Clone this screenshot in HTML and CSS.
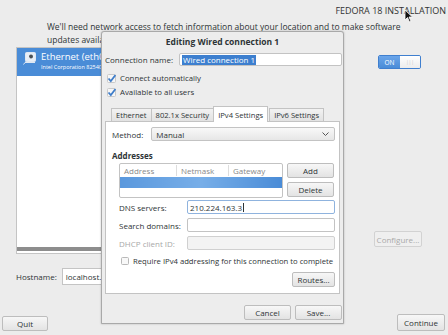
FILE: index.html
```html
<!DOCTYPE html>
<html lang="en">
<head>
    <meta charset="UTF-8">
    <title>Network Configuration</title>
    <link rel="stylesheet" href="styles.css">
</head>
<body>
    <header class="topbar">
        <span class="product">FEDORA 18 INSTALLATION</span>
    </header>
    <p class="intro">We'll need network access to fetch information about your location and to make software<br>updates available.</p>

    <div class="main">
        <div class="device-list">
            <div class="device selected">
                <svg class="device-icon" width="13" height="13" viewBox="0 0 13 13">
                    <rect x="2.5" y="0.5" width="10" height="9" rx="1" fill="#e8eef6" stroke="#dfe7f2"/>
                    <circle cx="8" cy="4.5" r="2" fill="#4a4f55"/>
                    <path d="M6.8 5.8 L2 10.5 L0.5 12.5 M2 10.5 L12 10.5" stroke="#dfe7f2" stroke-width="1" fill="none"/>
                </svg>
                <div class="device-text">
                    <div class="device-name">Ethernet (eth0)</div>
                    <div class="device-sub">Intel Corporation 82540EM Gigabit Ethernet Controller</div>
                </div>
            </div>
            <div class="list-fill"></div>
            <div class="hscroll"></div>
        </div>
        <div class="side">
            <div class="switch">
                <span class="switch-on">ON</span>
                <span class="switch-knob">|||</span>
            </div>
            <button class="btn configure" disabled>Configure...</button>
        </div>
    </div>

    <div class="hostname-row">
        <span class="hostname-label">Hostname:</span>
        <span class="hostname-input">localhost.localdomain</span>
    </div>

    <footer class="bottombar">
        <button class="btn quit">Quit</button>
        <button class="btn continue">Continue</button>
    </footer>

    <div class="dialog">
        <div class="dialog-title">Editing Wired connection 1</div>
        <div class="conn-row">
            <span class="conn-label">Connection name:</span>
            <span class="field conn-field"><span class="selection">Wired connection 1</span></span>
        </div>
        <label class="check-row first">
            <svg class="check" width="9" height="9" viewBox="0 0 9 9"><rect x="0.5" y="0.5" width="8" height="8" rx="1" fill="#f6f6f6" stroke="#c9c9c9"/><path d="M1.5 4.5 L3.8 7 L8.5 1" stroke="#3e7dc9" stroke-width="1.8" fill="none"/></svg>
            Connect automatically
        </label>
        <label class="check-row">
            <svg class="check" width="9" height="9" viewBox="0 0 9 9"><rect x="0.5" y="0.5" width="8" height="8" rx="1" fill="#f6f6f6" stroke="#c9c9c9"/><path d="M1.5 4.5 L3.8 7 L8.5 1" stroke="#3e7dc9" stroke-width="1.8" fill="none"/></svg>
            Available to all users
        </label>

        <div class="tabs">
            <span class="tab">Ethernet</span>
            <span class="tab">802.1x Security</span>
            <span class="tab active">IPv4 Settings</span>
            <span class="tab">IPv6 Settings</span>
        </div>
        <div class="panel">
            <div class="method-row">
                <span class="method-label">Method:</span>
                <span class="combo">Manual <svg width="7" height="5" viewBox="0 0 7 5"><path d="M0.5 0.5 L3.5 3.5 L6.5 0.5" stroke="#555" fill="none"/></svg></span>
            </div>
            <div class="section-title">Addresses</div>
            <div class="addr-block">
                <div class="addr-table">
                    <div class="addr-head">
                        <span class="col col-addr">Address</span>
                        <span class="col col-mask">Netmask</span>
                        <span class="col col-gw">Gateway</span>
                    </div>
                    <div class="addr-row"></div>
                </div>
                <div class="addr-buttons">
                    <button class="btn small">Add</button>
                    <button class="btn small">Delete</button>
                </div>
            </div>
            <div class="form-row">
                <span class="form-label">DNS servers:</span>
                <span class="field focus">210.224.163.3<span class="caret"></span></span>
            </div>
            <div class="form-row">
                <span class="form-label">Search domains:</span>
                <span class="field"></span>
            </div>
            <div class="form-row disabled">
                <span class="form-label">DHCP client ID:</span>
                <span class="field"></span>
            </div>
            <label class="check-row require">
                <svg class="check" width="8" height="8" viewBox="0 0 8 8"><rect x="0.5" y="0.5" width="7" height="7" rx="1" fill="#f8f8f8" stroke="#b9b9b9"/></svg>
                Require IPv4 addressing for this connection to complete
            </label>
            <div class="routes-row">
                <button class="btn routes">Routes...</button>
            </div>
        </div>
        <div class="dialog-buttons">
            <button class="btn action">Cancel</button>
            <button class="btn action">Save...</button>
        </div>
    </div>

    <svg class="cursor" width="10" height="14" viewBox="0 0 10 14">
        <path d="M1 1 L1 11 L3.5 8.5 L5.5 13 L7 12.3 L5 8 L8.5 8 Z" fill="#111" stroke="#fff" stroke-width="0.8"/>
    </svg>
</body>
</html>
```

FILE: styles.css
```css
body {
    margin: 0;
    width: 448px;
    height: 335px;
    overflow: hidden;
    position: relative;
    background-color: #ececec;
    font-family: 'Open Sans', 'DejaVu Sans', sans-serif;
    font-size: 8px;
    color: #2e3436;
}
.topbar {
    display: flex;
    justify-content: flex-end;
    height: 20px;
    padding: 4px 2px 0 0;
    box-sizing: border-box;
}
.product {
    font-size: 9px;
    color: #333;
}
.intro {
    margin: 0 0 0 47px;
    line-height: 13px;
    font-size: 8.5px;
}
.main {
    display: flex;
    margin-top: 1px;
}
.device-list {
    margin-left: 16px;
    width: 300px;
    height: 207px;
    background-color: #ffffff;
    border: 1px solid #c4c4c4;
    box-sizing: border-box;
    display: flex;
    flex-direction: column;
}
.device {
    display: flex;
    align-items: flex-start;
    gap: 5px;
    height: 28px;
    padding: 3px 0 0 6px;
    box-sizing: border-box;
}
.device.selected {
    background-color: #4a8cd7;
    color: #ffffff;
}
.device-icon {
    margin-top: 1px;
}
.device-text {
    width: 61px;
    overflow: hidden;
}
.device-name {
    font-size: 9.5px;
    line-height: 12px;
    white-space: nowrap;
    overflow: hidden;
}
.device-sub {
    font-size: 5.5px;
    line-height: 9px;
    white-space: nowrap;
    overflow: hidden;
}
.list-fill {
    flex: 1;
}
.hscroll {
    height: 4px;
    margin: 0 0 2px 0;
    background-color: #8d8d8d;
}
.side {
    flex: 1;
    display: flex;
    flex-direction: column;
    align-items: flex-start;
    padding-left: 62px;
}
.switch {
    display: flex;
    margin-top: 8px;
    width: 43px;
    height: 14px;
    border: 1px solid #3f7fcf;
    border-radius: 2px;
    box-sizing: border-box;
    overflow: hidden;
    font-size: 6.5px;
}
.switch-on {
    width: 21px;
    background: linear-gradient(#6aa5ea, #4a8cd7);
    color: #ffffff;
    display: flex;
    align-items: center;
    justify-content: center;
}
.switch-knob {
    flex: 1;
    background: linear-gradient(#ffffff, #ececec);
    color: #c8c8c8;
    display: flex;
    align-items: center;
    justify-content: center;
    font-size: 5px;
}
.btn {
    font-family: inherit;
    font-size: 8px;
    color: #2e3436;
    background: linear-gradient(#f7f7f7, #e3e3e3);
    border: 1px solid #bdbdbd;
    border-radius: 2px;
    padding: 0;
    display: flex;
    align-items: center;
    justify-content: center;
    box-sizing: border-box;
}
.configure {
    margin: 162px 0 0 -4px;
    width: 48px;
    height: 16px;
    color: #a9a9a9;
    background: #efefef;
    border-color: #d2d2d2;
}
.hostname-row {
    display: flex;
    align-items: center;
    margin: 14px 0 0 16px;
    height: 17px;
    gap: 5px;
}
.hostname-input {
    height: 17px;
    width: 46px;
    background-color: #ffffff;
    border: 1px solid #c4c4c4;
    border-right: none;
    box-sizing: border-box;
    padding-left: 3px;
    line-height: 15px;
    white-space: nowrap;
    overflow: hidden;
}
.bottombar {
    display: flex;
    justify-content: space-between;
    align-items: flex-end;
    margin-top: 31px;
    padding: 0 3px 0 2px;
}
.quit {
    width: 46px;
    height: 15px;
}
.continue {
    width: 48px;
    height: 17px;
    margin-top: -2px;
}

/* dialog overlaying the page */
.dialog {
    position: absolute;
    left: 101px;
    top: 31px;
    width: 243px;
    height: 293px;
    background-color: #ededed;
    border: 1px solid #a9a9a9;
    border-radius: 3px 3px 0 0;
    box-sizing: border-box;
    box-shadow: 0 0 2px rgba(0, 0, 0, 0.25);
}
.dialog-title {
    height: 19px;
    text-align: center;
    font-weight: bold;
    line-height: 20px;
    font-size: 8.5px;
}
.conn-row {
    display: flex;
    align-items: center;
    gap: 6px;
    padding-left: 3px;
    margin-top: 2px;
}
.field {
    display: flex;
    align-items: center;
    height: 14px;
    flex: 1;
    background-color: #ffffff;
    border: 1px solid #c3c3c3;
    border-radius: 2px;
    box-sizing: border-box;
    padding-left: 2px;
}
.conn-field {
    height: 13px;
    margin-right: 1px;
}
.selection {
    background-color: #3d7fcf;
    color: #ffffff;
    padding: 0 1px;
    line-height: 10px;
}
.check-row {
    display: flex;
    align-items: center;
    gap: 4px;
    padding-left: 5px;
    height: 14px;
    font-size: 7.8px;
    white-space: nowrap;
}
.check-row.first {
    margin-top: 5px;
}
.tabs {
    display: flex;
    align-items: flex-end;
    margin: 7px 0 0 9px;
    height: 15px;
}
.tab {
    height: 13px;
    padding: 0 4px;
    border: 1px solid #c3c3c3;
    border-bottom: none;
    background: linear-gradient(#f2f2f2, #e2e2e2);
    box-sizing: border-box;
    display: flex;
    align-items: center;
    font-size: 7.6px;
    margin-right: -1px;
}
.tab.active {
    height: 16px;
    background: #ffffff;
    position: relative;
    z-index: 1;
    margin-bottom: -1px;
    margin-right: 1px;
}
.panel {
    margin: 0 3px 0 3px;
    height: 173px;
    background-color: #ffffff;
    border: 1px solid #c3c3c3;
    box-sizing: border-box;
    padding: 5px 4px 0 6px;
}
.method-row {
    display: flex;
    align-items: center;
    gap: 8px;
}
.combo {
    flex: 1;
    height: 14px;
    display: flex;
    align-items: center;
    justify-content: space-between;
    padding: 0 5px 0 4px;
    border: 1px solid #c3c3c3;
    border-radius: 2px;
    background: linear-gradient(#f8f8f8, #e6e6e6);
    box-sizing: border-box;
}
.section-title {
    font-weight: bold;
    margin-top: 10px;
    line-height: 10px;
}
.addr-block {
    display: flex;
    gap: 4px;
    margin: 2px 0 0 7px;
}
.addr-table {
    width: 164px;
    height: 35px;
    border: 1px solid #c3c3c3;
    border-radius: 2px;
    box-sizing: border-box;
}
.addr-head {
    display: flex;
    height: 12px;
    align-items: center;
    color: #888888;
}
.col {
    padding-left: 4px;
    box-sizing: border-box;
}
.col-addr {
    width: 57px;
    border-right: 1px solid #dddddd;
}
.col-mask {
    width: 52px;
    border-right: 1px solid #dddddd;
}
.addr-row {
    height: 11px;
    margin-top: 1px;
    background: linear-gradient(90deg, #5a98dd, #77aee8 50%, #4a8cd7);
    filter: blur(0.6px);
}
.addr-buttons {
    display: flex;
    flex-direction: column;
    gap: 4px;
}
.btn.small {
    width: 47px;
    height: 15px;
}
.form-row {
    display: flex;
    align-items: center;
    margin: 2px 0 0 7px;
    height: 14px;
}
.form-row + .form-row {
    margin-top: 4px;
}
.form-label {
    width: 68px;
}
.field.focus {
    border-color: #8fb3de;
}
.caret {
    width: 1px;
    height: 9px;
    background-color: #2e3436;
    margin-left: 1px;
}
.form-row.disabled {
    color: #a8a8a8;
}
.form-row.disabled .field {
    background-color: #f3f3f3;
    border-color: #d0d0d0;
}
.check-row.require {
    margin: 4px 0 0 9px;
    padding-left: 0;
    gap: 4px;
    font-size: 7.7px;
}
.routes-row {
    display: flex;
    justify-content: flex-end;
    margin-top: 4px;
}
.btn.routes {
    width: 43px;
    height: 15px;
}
.dialog-buttons {
    display: flex;
    justify-content: flex-end;
    gap: 4px;
    margin: 11px 1px 0 0;
}
.btn.action {
    width: 47px;
    height: 15px;
}
.cursor {
    position: absolute;
    left: 404px;
    top: 9px;
}
```
